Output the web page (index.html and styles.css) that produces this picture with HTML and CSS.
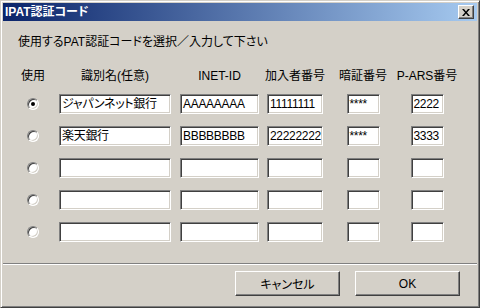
FILE: index.html
```html
<!DOCTYPE html>
<html lang="ja">
<head>
<meta charset="utf-8">
<title>IPAT認証コード</title>
<link rel="stylesheet" href="styles.css">
</head>
<body>
<div class="window">
  <div class="titlebar">
    <span class="title">IPAT認証コード</span>
    <span class="close">
      <svg width="8" height="7" viewBox="0 0 8 7"><path d="M0 0h2l2 2.5L6 0h2L5 3.5 8 7H6L4 4.5 2 7H0l3-3.5z" fill="#000"/></svg>
    </span>
  </div>

  <div class="content">
    <div class="intro">使用するPAT認証コードを選択／入力して下さい</div>

    <div class="grid">
      <div class="head">使用</div>
      <div class="head">識別名(任意)</div>
      <div class="head">INET-ID</div>
      <div class="head">加入者番号</div>
      <div class="head">暗証番号</div>
      <div class="head">P-ARS番号</div>

      <span class="radio checked"></span>
      <div class="field w-name">ジャパンネット銀行</div>
      <div class="field w-inet">AAAAAAAA</div>
      <div class="field w-sub">11111111</div>
      <div class="field w-pin">****</div>
      <div class="field w-pin">2222</div>

      <span class="radio"></span>
      <div class="field w-name">楽天銀行</div>
      <div class="field w-inet">BBBBBBBB</div>
      <div class="field w-sub">22222222</div>
      <div class="field w-pin">****</div>
      <div class="field w-pin">3333</div>

      <span class="radio"></span>
      <div class="field w-name"></div>
      <div class="field w-inet"></div>
      <div class="field w-sub"></div>
      <div class="field w-pin"></div>
      <div class="field w-pin"></div>

      <span class="radio"></span>
      <div class="field w-name"></div>
      <div class="field w-inet"></div>
      <div class="field w-sub"></div>
      <div class="field w-pin"></div>
      <div class="field w-pin"></div>

      <span class="radio"></span>
      <div class="field w-name"></div>
      <div class="field w-inet"></div>
      <div class="field w-sub"></div>
      <div class="field w-pin"></div>
      <div class="field w-pin"></div>
    </div>
  </div>

  <div class="sep"></div>

  <div class="buttons">
    <div class="btn">キャンセル</div>
    <div class="btn">OK</div>
  </div>
</div>
</body>
</html>
```
FILE: styles.css
```css
body {
  margin: 0;
  background: #d4d0c8;
  font-family: "Liberation Sans", "Noto Sans CJK JP", sans-serif;
  font-size: 12px;
  font-feature-settings: "palt";
  color: #000;
}

.window {
  width: 480px;
  height: 308px;
  box-sizing: border-box;
  border: 1px solid;
  border-color: #d4d0c8 #404040 #404040 #d4d0c8;
  box-shadow: inset 1px 1px #fff, inset -1px -1px #808080;
  padding: 2px;
  display: flex;
  flex-direction: column;
  background: #d4d0c8;
}

.titlebar {
  height: 18px;
  display: flex;
  align-items: center;
  justify-content: space-between;
  padding: 0 3px 0 2px;
  background: linear-gradient(to right, #0a246a, #a6caf0);
}

.title {
  color: #fff;
  font-weight: bold;
  line-height: 14px;
}

.close {
  width: 16px;
  height: 14px;
  box-sizing: border-box;
  display: flex;
  align-items: center;
  justify-content: center;
  background: #d4d0c8;
  border: 1px solid;
  border-color: #fff #404040 #404040 #fff;
  box-shadow: inset -1px -1px #808080;
}

.content {
  flex: 1;
  padding: 14px 0 0 15px;
}

.intro {
  line-height: 14px;
}

.grid {
  margin: 19px 0 0 -4px;
  display: grid;
  grid-template-columns: 38px 126px 83px 68px 68px 60px;
  grid-template-rows: 14px;
  grid-auto-rows: 20px;
  row-gap: 12px;
  justify-items: center;
  align-items: center;
}

.head {
  line-height: 14px;
  margin-bottom: -1px;
  white-space: nowrap;
}

.radio {
  width: 12px;
  height: 12px;
  box-sizing: border-box;
  border-radius: 50%;
  border: 1px solid;
  border-color: #808080 #fff #fff #808080;
  box-shadow: inset 1px 1px #404040, inset -1px -1px #d4d0c8;
  background: #fff;
  position: relative;
}

.radio.checked::after {
  content: "";
  position: absolute;
  left: 3px;
  top: 3px;
  width: 4px;
  height: 4px;
  border-radius: 50%;
  background: #000;
}

.field {
  height: 20px;
  box-sizing: border-box;
  border: 1px solid;
  border-color: #808080 #fff #fff #808080;
  box-shadow: inset 1px 1px #404040, inset -1px -1px #d4d0c8;
  background: #fff;
  padding: 0 0 0 2px;
  line-height: 18px;
  letter-spacing: -0.3px;
  white-space: nowrap;
  overflow: hidden;
}

.w-name { width: 112px; }
.w-inet { width: 79px; }
.w-sub { width: 56px; }
.w-pin { width: 33px; }

.sep {
  height: 2px;
  box-sizing: border-box;
  border-top: 1px solid #808080;
  border-bottom: 1px solid #fff;
}

.buttons {
  display: flex;
  justify-content: flex-end;
  gap: 15px;
  padding: 6px 17px 9px 0;
}

.btn {
  width: 105px;
  height: 25px;
  box-sizing: border-box;
  border: 1px solid;
  border-color: #fff #404040 #404040 #fff;
  box-shadow: inset -1px -1px #808080;
  display: flex;
  align-items: center;
  justify-content: center;
}
```
